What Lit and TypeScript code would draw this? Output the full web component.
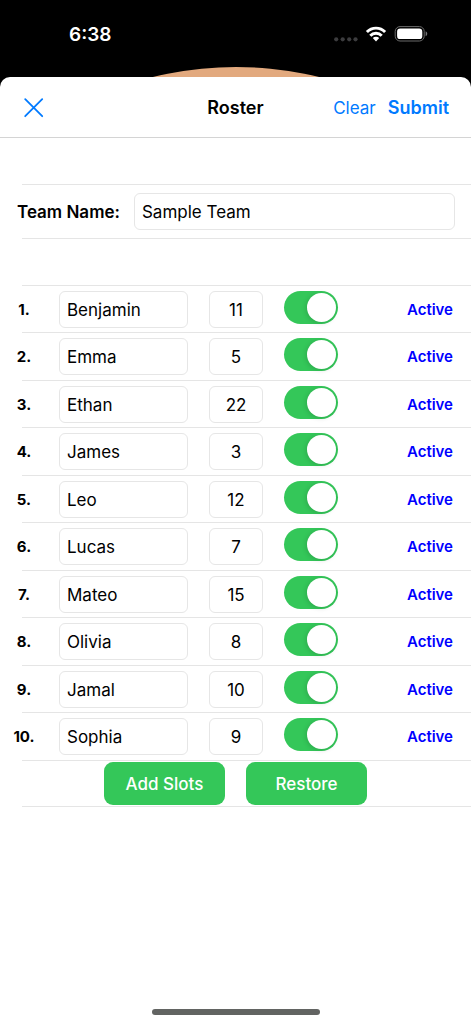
import { LitElement, html, css, svg } from "lit";
import { customElement, state } from "lit/decorators.js";

interface Player {
  name: string;
  jersey: string;
  active: boolean;
}

const INITIAL_PLAYERS: Player[] = [
  { name: "Benjamin", jersey: "11", active: true },
  { name: "Emma", jersey: "5", active: true },
  { name: "Ethan", jersey: "22", active: true },
  { name: "James", jersey: "3", active: true },
  { name: "Leo", jersey: "12", active: true },
  { name: "Lucas", jersey: "7", active: true },
  { name: "Mateo", jersey: "15", active: true },
  { name: "Olivia", jersey: "8", active: true },
  { name: "Jamal", jersey: "10", active: true },
  { name: "Sophia", jersey: "9", active: true },
];

@customElement("status-bar")
class StatusBar extends LitElement {
  static styles = css`
    :host {
      display: block;
      position: relative;
      height: 77px;
      background: #000;
      overflow: hidden;
    }
    .court {
      position: absolute;
      top: 67px;
      left: 50%;
      width: 700px;
      height: 700px;
      margin-left: -350px;
      border-radius: 50%;
      background: #e2a97e;
    }
    .bar {
      display: flex;
      align-items: center;
      justify-content: space-between;
      height: 68px;
      padding: 0 43px 0 69px;
      color: #fff;
    }
    .time {
      padding-top: 2px;
      font-size: 19px;
      font-weight: 600;
      line-height: 24px;
    }
    .icons {
      display: block;
    }
  `;

  render() {
    return html`
      <div class="court"></div>
      <div class="bar">
        <span class="time">6:38</span>
        <svg class="icons" width="95" height="20" viewBox="0 0 95 20" aria-hidden="true">
          ${[3, 9.5, 16, 22.3].map(
            (x) => svg`<circle cx=${x + 0.2} cy="15.3" r="2.1" fill="#3c3c3e" />`
          )}
          <g fill="none" stroke="#fff" stroke-width="2.9">
            <path d="M33.9 8.1 A12.4 12.4 0 0 1 52.1 8.1" />
            <path d="M37.3 11.7 A7.7 7.7 0 0 1 48.7 11.7" />
          </g>
          <path fill="#fff" d="M39.8 14.1 A4.6 4.6 0 0 1 46.2 14.1 L43 17.4 Z" />
          <rect x="62.2" y="2.6" width="29" height="14.4" rx="4.8" fill="none" stroke="#6a6a6a" stroke-width="1" />
          <rect x="64.1" y="4.5" width="25.2" height="10.6" rx="3.2" fill="#fff" />
          <path fill="#77777a" d="M92.6 7.2 C94.8 8 94.8 11.4 92.6 12.2 Z" />
        </svg>
      </div>
    `;
  }
}

@customElement("app-root")
class AppRoot extends LitElement {
  static styles = css`
    :host {
      display: flex;
      flex-direction: column;
      min-height: 100vh;
      background: #000;
      color: #000;
      font-family: Inter, "Liberation Sans", sans-serif;
    }
    * {
      box-sizing: border-box;
    }
    button,
    input {
      font: inherit;
      color: inherit;
      margin: 0;
    }
    .sheet {
      flex: 1;
      display: flex;
      flex-direction: column;
      background: #fff;
      border-radius: 10px 10px 0 0;
      z-index: 1;
    }
    .nav {
      display: grid;
      grid-template-columns: 1fr auto 1fr;
      align-items: center;
      height: 61px;
      padding: 1px 22px 0;
      border-bottom: 1px solid #d4d4d4;
      font-size: 18px;
      line-height: 24px;
    }
    .title {
      margin: 0;
      font-size: 18px;
      font-weight: 600;
    }
    .link {
      padding: 0;
      border: 0;
      background: none;
      color: #007aff;
      font-size: 17px;
      cursor: pointer;
    }
    .close {
      display: flex;
      justify-self: start;
    }
    .actions {
      display: flex;
      align-items: baseline;
      justify-content: flex-end;
      gap: 12px;
    }
    .strong {
      font-size: 18px;
      font-weight: 600;
    }
    .line {
      height: 1px;
      margin-left: 22px;
      background: #e5e5e5;
    }
    .gap {
      height: 46px;
    }
    .team {
      display: flex;
      align-items: center;
      gap: 14px;
      height: 53px;
      padding: 0 16px 0 17px;
    }
    .team-label {
      font-size: 17px;
      font-weight: 600;
    }
    .field {
      min-width: 0;
      height: 37px;
      padding: 0 7px;
      border: 1px solid #e6e6e6;
      border-radius: 6px;
      background: #fff;
      font-size: 17px;
      line-height: 24px;
    }
    .grow {
      flex: 1;
    }
    .roster {
      margin: 0;
      padding: 0;
      list-style: none;
    }
    .player {
      display: grid;
      grid-template-columns: 28px 129px 54px 54px 1fr;
      column-gap: 21px;
      align-items: center;
      height: 47px;
      padding: 0 18px 0 10px;
      background: linear-gradient(#e5e5e5, #e5e5e5) 22px 100% / 100% 1px no-repeat;
    }
    .player:nth-child(even) {
      height: 48px;
      padding-bottom: 1px;
    }
    .slot {
      font-size: 15px;
      font-weight: 700;
      text-align: center;
    }
    .jersey {
      text-align: center;
    }
    .switch {
      appearance: none;
      display: flex;
      width: 54px;
      height: 33px;
      padding: 2px;
      margin-bottom: 4px;
      border-radius: 17px;
      background: #e9e9ea;
      cursor: pointer;
    }
    .switch::before {
      content: "";
      width: 29px;
      height: 29px;
      border-radius: 50%;
      background: #fff;
      box-shadow: -1px 1px 5px rgba(0, 0, 0, 0.15);
    }
    .switch:checked {
      justify-content: flex-end;
      background: #34c759;
    }
    .status {
      color: #0000ff;
      font-size: 15px;
      font-weight: 600;
      text-align: right;
    }
    .footer {
      display: flex;
      align-items: center;
      justify-content: center;
      gap: 21px;
      height: 45px;
    }
    .primary {
      width: 121px;
      height: 43px;
      padding: 0;
      border: 0;
      border-radius: 9px;
      background: #34c759;
      color: #fff;
      font-size: 17px;
      font-weight: 500;
      cursor: pointer;
    }
    .home {
      width: 168px;
      height: 6px;
      margin: auto auto 9px;
      border-radius: 3px;
      background: #626462;
    }
  `;

  @state() private team = "Sample Team";
  @state() private players: Player[] = INITIAL_PLAYERS.map((p) => ({ ...p }));

  private updatePlayer(index: number, patch: Partial<Player>) {
    this.players = this.players.map((p, i) => (i === index ? { ...p, ...patch } : p));
  }

  private clear() {
    this.players = this.players.map((p) => ({ ...p, name: "", jersey: "" }));
  }

  private addSlot() {
    this.players = [...this.players, { name: "", jersey: "", active: true }];
  }

  private restore() {
    this.players = INITIAL_PLAYERS.map((p) => ({ ...p }));
  }

  private renderPlayer(p: Player, i: number) {
    return html`
      <li class="player">
        <label class="slot" for="name-${i}">${i + 1}.</label>
        <input
          class="field"
          id="name-${i}"
          type="text"
          .value=${p.name}
          @input=${(e: Event) => this.updatePlayer(i, { name: (e.target as HTMLInputElement).value })}
        />
        <input
          class="field jersey"
          type="text"
          inputmode="numeric"
          aria-label="Jersey number"
          .value=${p.jersey}
          @input=${(e: Event) => this.updatePlayer(i, { jersey: (e.target as HTMLInputElement).value })}
        />
        <input
          class="switch"
          id="active-${i}"
          type="checkbox"
          role="switch"
          .checked=${p.active}
          @change=${(e: Event) => this.updatePlayer(i, { active: (e.target as HTMLInputElement).checked })}
        />
        <label class="status" for="active-${i}">${p.active ? "Active" : "Inactive"}</label>
      </li>
    `;
  }

  render() {
    return html`
      <status-bar></status-bar>
      <main class="sheet">
        <header class="nav">
          <button class="link close" aria-label="Close">
            <svg width="23" height="22" viewBox="0 0 23 22" aria-hidden="true">
              <path
                d="M3.2 2.2 L20.2 19.2 M20.2 2.2 L3.2 19.2"
                fill="none"
                stroke="currentColor"
                stroke-width="1.8"
                stroke-linecap="round"
              />
            </svg>
          </button>
          <h1 class="title">Roster</h1>
          <div class="actions">
            <button class="link" @click=${this.clear}>Clear</button>
            <button class="link strong">Submit</button>
          </div>
        </header>
        <div class="gap"></div>
        <div class="line"></div>
        <div class="team">
          <label class="team-label" for="team">Team Name:</label>
          <input
            class="field grow"
            id="team"
            type="text"
            .value=${this.team}
            @input=${(e: Event) => (this.team = (e.target as HTMLInputElement).value)}
          />
        </div>
        <div class="line"></div>
        <div class="gap"></div>
        <div class="line"></div>
        <ul class="roster">
          ${this.players.map((p, i) => this.renderPlayer(p, i))}
        </ul>
        <div class="footer">
          <button class="primary" @click=${this.addSlot}>Add Slots</button>
          <button class="primary" @click=${this.restore}>Restore</button>
        </div>
        <div class="line"></div>
        <div class="home"></div>
      </main>
    `;
  }
}
